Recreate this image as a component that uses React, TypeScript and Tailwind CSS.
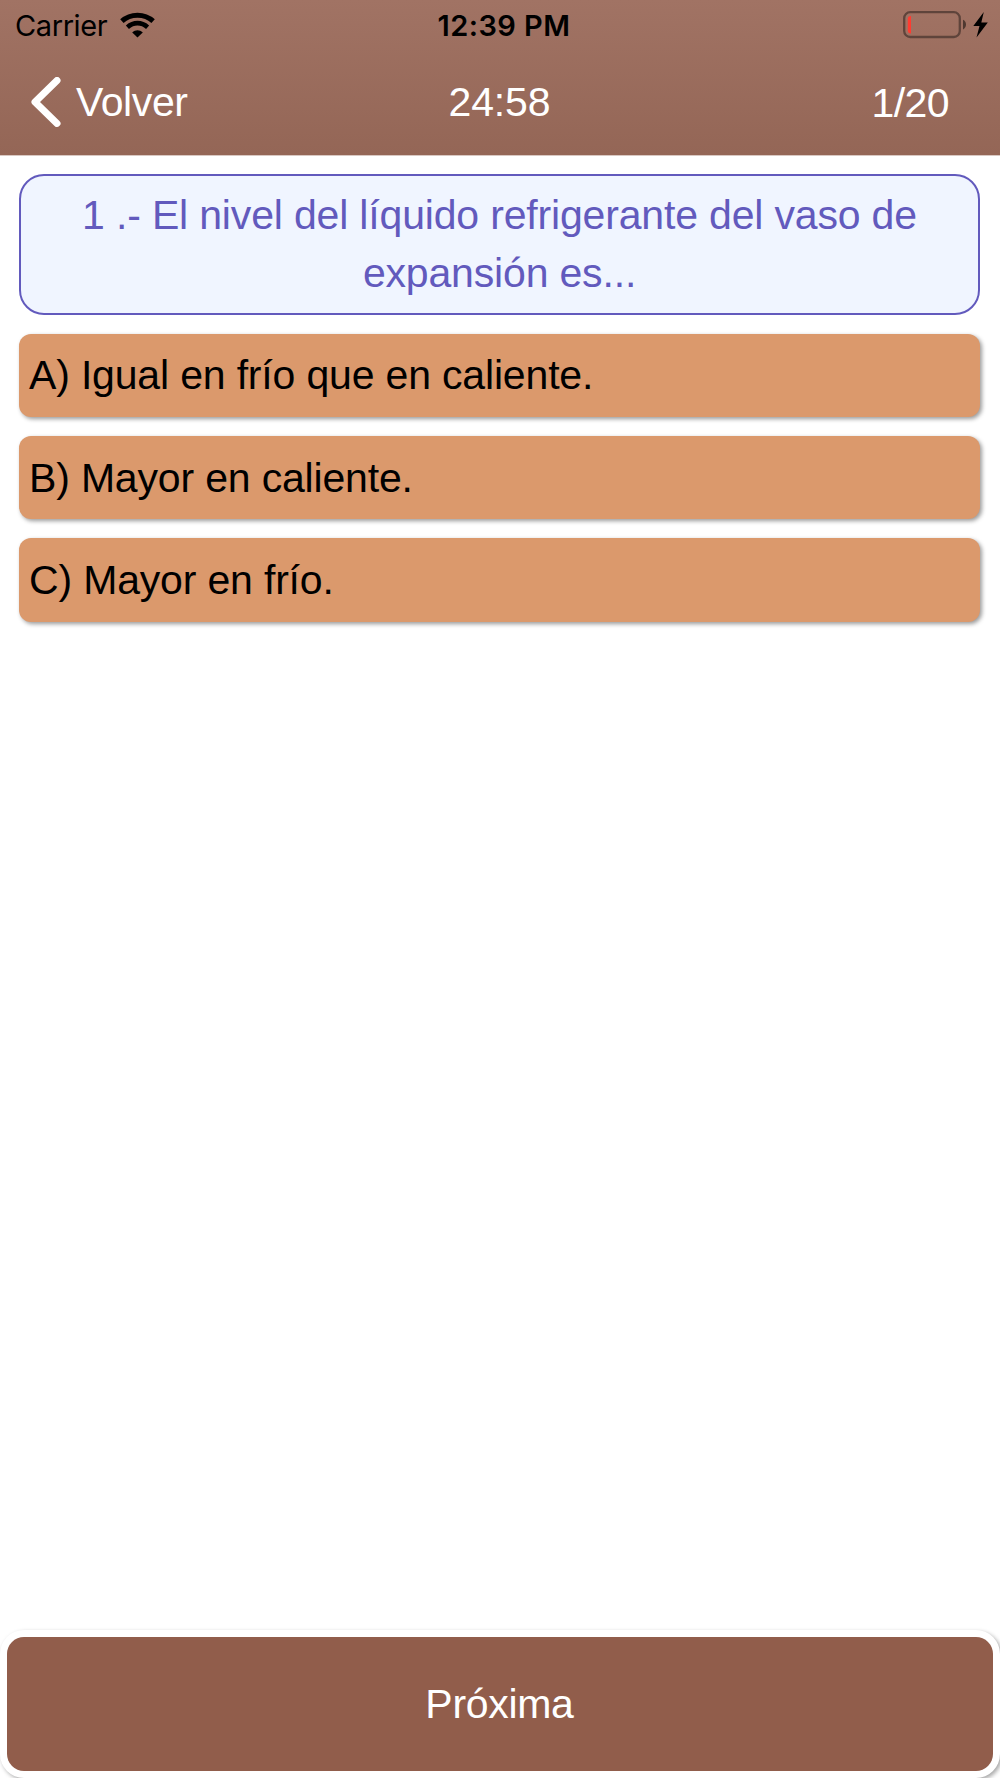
const options = [
  'A) Igual en frío que en caliente.',
  'B) Mayor en caliente.',
  'C) Mayor en frío.',
];

function WifiIcon() {
  return (
    <svg className="ml-[13px] h-[26px] w-[36px]" viewBox="0 0 36 26" fill="none" stroke="#000">
      <path d="M1.9 9.2C10.5 1.2 24.5 1.2 33.1 9.2" strokeWidth="5" />
      <path d="M7.4 15.2C13.5 9.8 21.5 9.8 27.6 15.2" strokeWidth="4.6" />
      <path d="M12.2 20.4C15.5 17.4 19.5 17.4 22.8 20.4L17.5 25.6Z" fill="#000" stroke="none" />
    </svg>
  );
}

function BatteryIcon() {
  return (
    <svg className="h-[28px] w-[86px]" viewBox="0 0 86 28">
      <rect x="1.2" y="1.2" width="55.6" height="24.8" rx="6" fill="none" stroke="#5f443b" strokeWidth="2.3" />
      <path d="M4.8 8.2Q4.8 5 8 5V22.5Q4.8 22.5 4.8 19.3Z" fill="#ff3b30" />
      <path d="M60 8.8Q63 10.3 63 13.5T60 18.4Z" fill="#4e3830" />
      <path d="M80.8 1 70.3 15H76.5L73.5 26.5 84.8 11.6H78.3Z" fill="#000" />
    </svg>
  );
}

export default function App() {
  return (
    <div className="flex h-[1778px] w-[1000px] flex-col overflow-hidden bg-white font-['Liberation_Sans',Arial,sans-serif] text-[41px] tracking-[-0.17px]">
      <header className="h-[156px] shrink-0 border-b border-[#d9c8c2] bg-linear-to-b from-[#a17364] to-[#946656]">
        <div className="grid h-[50px] grid-cols-3 items-center font-['Inter',sans-serif] text-[29px] text-black">
          <div className="flex items-center pl-[15px]">
            <span className="pt-px tracking-[-0.4px]">Carrier</span>
            <WifiIcon />
          </div>
          <span className="pl-[8px] pt-px text-center text-[29px] font-semibold tracking-[0.45px]">12:39 PM</span>
          <div className="flex justify-end pr-[11px]">
            <BatteryIcon />
          </div>
        </div>
        <div className="grid h-[105px] grid-cols-3 items-center text-white">
          <button className="flex items-center pl-[30px]">
            <svg className="h-[52px] w-[32px]" viewBox="0 0 32 52" fill="none" stroke="#fff" strokeWidth="7" strokeLinecap="round" strokeLinejoin="round">
              <path d="M27 3.4 5 25 27 46.4" />
            </svg>
            <span className="pl-[14px] pt-px tracking-[-0.4px]">Volver</span>
          </button>
          <span className="pr-px pt-px text-center">24:58</span>
          <span className="pr-[51px] pt-[3px] text-right tracking-[-0.6px]">1/20</span>
        </div>
      </header>

      <main className="flex flex-1 flex-col gap-[19px] pl-[19px] pr-[20px] pt-[18px]">
        <section className="h-[141px] rounded-[25px] border-2 border-[#625abd] bg-[#f0f5ff] px-[24px] pt-[10px] text-center leading-[58px] text-[#625abd]">
          1 .- El nivel del líquido refrigerante del vaso de expansión es...
        </section>
        {options.map((option) => (
          <button
            key={option}
            className="flex h-[83.2px] items-center rounded-[12px] bg-[#db996c] px-[10px] pt-px text-left text-black shadow-[2px_2px_4px_rgba(0,0,0,0.4)]"
          >
            {option}
          </button>
        ))}
      </main>

      <footer className="h-[148px] shrink-0 rounded-[24px] bg-white p-[7px] shadow-[2px_2px_4px_rgba(0,0,0,0.35)]">
        <button className="flex h-[134px] w-full items-center justify-center rounded-[17px] bg-[#915d4b] pr-px pt-px tracking-[-0.3px] text-white">
          Próxima
        </button>
      </footer>
    </div>
  );
}
